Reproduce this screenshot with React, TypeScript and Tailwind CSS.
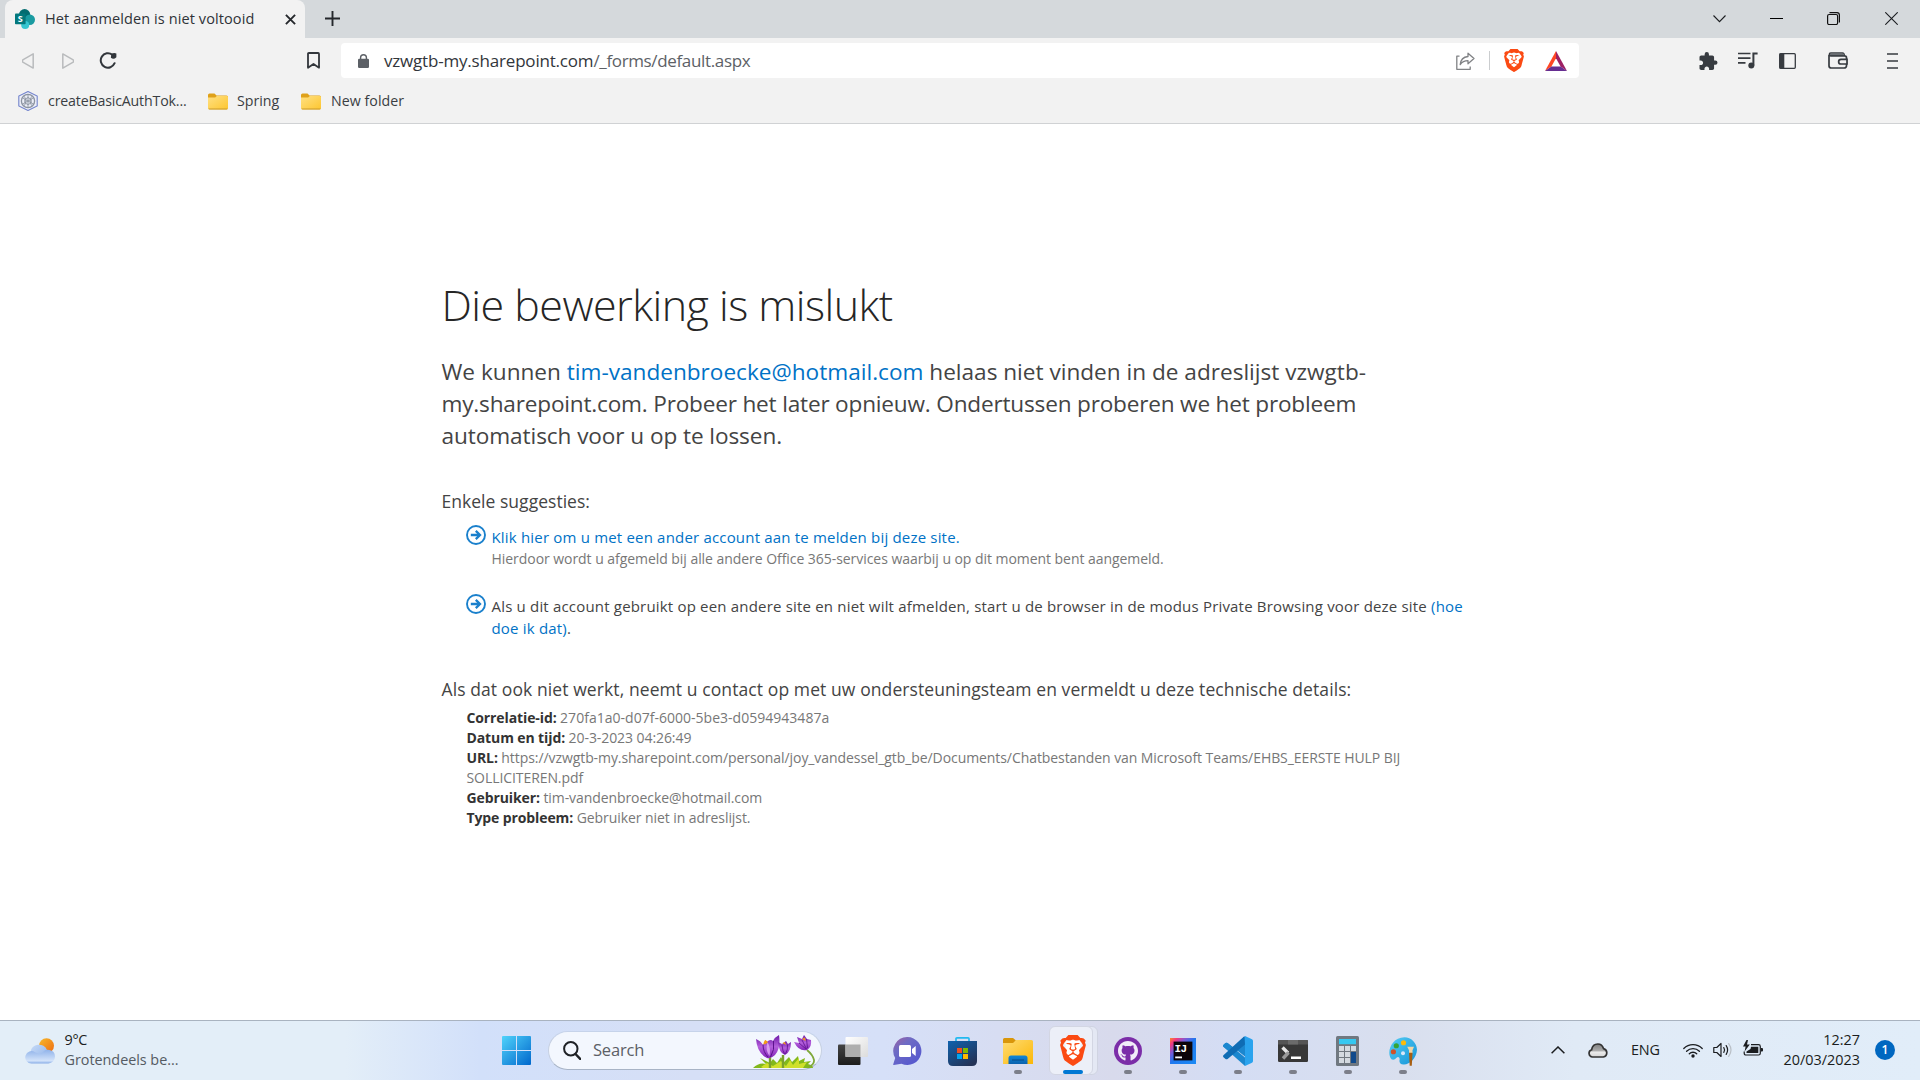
import React from "react";
import { SiBrave } from "react-icons/si";
import { FaGithub } from "react-icons/fa";

type IconProps = { className: string };

/* ---------- Browser icons ---------- */

const SharePointIcon = ({ className }: IconProps) => (
  <svg viewBox="0 0 20 20" className={className}>
    <circle cx="9.6" cy="5.6" r="5.6" fill="#036c70" />
    <circle cx="14.8" cy="10.8" r="5.2" fill="#1a9ba1" />
    <circle cx="10.2" cy="16" r="4" fill="#37c6d0" />
    <rect x="0" y="4.6" width="10.6" height="10.6" rx="0.8" fill="#03787c" />
    <text x="5.3" y="13.2" textAnchor="middle" fontFamily="Open Sans, sans-serif" fontWeight="700" fontSize="9" fill="#fff">S</text>
  </svg>
);

const HexIcon = ({ className }: IconProps) => (
  <svg viewBox="0 0 20 20" className={className} fill="none">
    <path d="M10 .5 19.200 5v10L10 19.500.800 15V5z" stroke="#7384cc" strokeWidth="1.100" fill="#eceef7" />
    <circle cx="10" cy="10" r="6.6" stroke="#8b93a0" strokeWidth="1.3" />
    <path d="M10 3.4v13.2M4.2 6.6l11.6 6.8M15.8 6.6 4.2 13.4M6 5.2c2.4 3 2.4 6.600 0 9.600M14 5.200c-2.400 3-2.400 6.600 0 9.600M10 6.500l3.200 1.800v3.600L10 13.600l-3.200-1.700V8.300z" stroke="#8b93a0" strokeWidth=".9" />
  </svg>
);

const BookmarkFolder = ({ className }: IconProps) => (
  <svg viewBox="0 0 20 17" className={className}>
    <path d="M0 2a1.500 1.500 0 0 1 1.500-1.500h5L8.500 2.500h10A1.500 1.500 0 0 1 20 4v10H0z" fill="#dfa11a" />
    <path d="M0 4.600h7.200L8.800 3H18.600A1.300 1.300 0 0 1 20 4.300V15a1.500 1.500 0 0 1-1.500 1.500h-17A1.500 1.500 0 0 1 0 15z" fill="url(#bf)" />
    <path d="M.3 15.600c.4.600.8.900 1.200.900h17c.5 0 .9-.300 1.200-.900z" fill="#c99a2c" />
    <defs><linearGradient id="bf" x1="0" y1="0" x2="1" y2="1"><stop stopColor="#ffe083" /><stop offset="1" stopColor="#fdc62f" /></linearGradient></defs>
  </svg>
);

const BackIcon = ({ className }: IconProps) => (
  <svg viewBox="0 0 12 16" className={className} fill="none" stroke="#b9bbbd" strokeWidth="1.500" strokeLinejoin="round">
    <path d="M11.200.900v14.200L.8 9.200Q0 8 .8 6.800z" />
  </svg>
);

const ReloadIcon = ({ className }: IconProps) => (
  <svg viewBox="0 0 18 17" className={className} fill="none" stroke="#32363b" strokeWidth="2">
    <path d="M15.600 11.200A7.200 7.200 0 1 1 13.300 2.700" strokeLinecap="round" />
    <path d="M12.300 1.800Q15 .500 17.400 1.400V5.200Q14.500 8 11.900 5.800z" fill="#32363b" stroke="none" />
  </svg>
);

const BookmarkIcon = ({ className }: IconProps) => (
  <svg viewBox="0 0 13 17" className={className} fill="none" stroke="#32363b" strokeWidth="1.800" strokeLinejoin="round">
    <path d="M1 1.900Q1 1 1.900 1h9.200q.9 0 .9.900V15.700L6.500 12 1 15.700z" />
  </svg>
);

const LockIcon = ({ className }: IconProps) => (
  <svg viewBox="0 0 11 14" className={className}>
    <path d="M2.600 6V3.600a2.900 2.900 0 0 1 5.800 0V6" fill="none" stroke="#5c6066" strokeWidth="1.400" />
    <rect x="0" y="4.800" width="11" height="9.200" rx="1.200" fill="#5c6066" />
  </svg>
);

const ShareIcon = ({ className }: IconProps) => (
  <svg viewBox="0 0 19 18" className={className} fill="none" stroke="#808285" strokeWidth="1.300" strokeLinejoin="round">
    <path d="M3.500 4.200H.800V17.300H14.200V14.600" />
    <path d="M12 1.200 18 6.600 12 11.800V8.700C8.500 8.700 6 10 4.200 12.600 4.600 8.300 7.600 5 12 4.500z" />
  </svg>
);

const BatIcon = ({ className }: IconProps) => (
  <svg viewBox="0 0 22 20" className={className}>
    <path d="M11 0 0 20 6.400 15.600 11 7.200z" fill="#ff4724" />
    <path d="M11 0 22 20 15.600 15.600 11 7.200z" fill="#9e1f63" />
    <path d="M0 20H22L15.600 15.600H6.400z" fill="#662d91" />
  </svg>
);

const PuzzleIcon = ({ className }: IconProps) => (
  <svg viewBox="2 1 21 21" className={className} fill="#373b40">
    <path d="M20.500 11H19V7c0-1.100-.9-2-2-2h-4V3.500a2.500 2.500 0 0 0-5 0V5H4c-1.100 0-1.990.9-1.990 2v3.800H3.500c1.490 0 2.700 1.210 2.700 2.700s-1.210 2.700-2.700 2.700H2V20c0 1.100.9 2 2 2h3.800v-1.500c0-1.490 1.210-2.700 2.700-2.700s2.700 1.210 2.700 2.700V22H17c1.100 0 2-.9 2-2v-4h1.500a2.500 2.500 0 0 0 0-5z" />
  </svg>
);

const PlaylistIcon = ({ className }: IconProps) => (
  <svg viewBox="0 0 20 17" className={className} fill="none" stroke="#373b40" strokeWidth="1.700">
    <path d="M0 1.500h12.500M0 6.200h12.500M0 10.800h7.500" />
    <path d="M15.400 13.500V1.500h4.200" strokeWidth="2" />
    <circle cx="13.300" cy="13.500" r="3" fill="#373b40" stroke="none" />
  </svg>
);

const SidebarIcon = ({ className }: IconProps) => (
  <svg viewBox="0 0 17 16" className={className}>
    <rect x=".7" y=".7" width="15.600" height="14.600" rx="1" fill="none" stroke="#373b40" strokeWidth="1.300" />
    <rect x=".5" y=".5" width="4.800" height="15" fill="#373b40" />
  </svg>
);

const WalletIcon = ({ className }: IconProps) => (
  <svg viewBox="0 0 20 17" className={className} fill="none" stroke="#373b40" strokeWidth="1.700">
    <path d="M1 3V13.700A2.300 2.300 0 0 0 3.300 16H16.200A2.300 2.300 0 0 0 18.500 13.700V5.800A2 2 0 0 0 16.500 3.800H2.800A1.400 1.400 0 0 1 2.800 1H14.500Q16.200 1 16.200 3.800" />
    <path d="M2 2.400H16" stroke="#6b6f74" strokeWidth="1.500" />
    <path d="M19 7.300H13a2.300 2.300 0 0 0 0 4.700H19z" fill="#f2f2f2" />
  </svg>
);

/* ---------- Page icon ---------- */

const ArrowCircle = ({ className }: IconProps) => (
  <svg viewBox="0 0 20 20" className={className} fill="none" stroke="#1a80cc" strokeWidth="1.900">
    <circle cx="10" cy="10" r="9" />
    <path d="M4.800 10H13.500M9.800 5.900 14 10l-4.200 4.100" strokeWidth="2.300" />
  </svg>
);

/* ---------- Taskbar icons ---------- */

const WeatherIcon = ({ className }: IconProps) => (
  <svg viewBox="0 0 30 26" className={className}>
    <defs>
      <linearGradient id="sun" x1="0" y1="0" x2="1" y2="1"><stop stopColor="#f7b92b" /><stop offset="1" stopColor="#ee6a12" /></linearGradient>
      <linearGradient id="cl" x1="0" y1="0" x2="0" y2="1"><stop stopColor="#90b3ea" /><stop offset=".8" stopColor="#d3e3fa" /><stop offset="1" stopColor="#86abe6" /></linearGradient>
      <linearGradient id="cl2" x1="0" y1="0" x2="1" y2="1"><stop stopColor="#c6daf7" /><stop offset="1" stopColor="#8fb2e9" /></linearGradient>
    </defs>
    <circle cx="21.500" cy="7.800" r="7.500" fill="url(#sun)" />
    <path d="M5.500 14A8.500 8 0 0 1 22 12V24H6z" fill="url(#cl2)" />
    <path d="M6.500 25.500A6.200 6.200 0 1 1 10 14.200l4 1.800 2.800.300A6.800 6.800 0 0 1 30 18.500a7 7 0 0 1-6.500 7z" fill="url(#cl)" />
  </svg>
);

const StartIcon = ({ className }: IconProps) => (
  <svg viewBox="0 0 29 29" className={className}>
    <defs><linearGradient id="win" x1="0" y1="0" x2="29" y2="29" gradientUnits="userSpaceOnUse"><stop stopColor="#50d3fb" /><stop offset="1" stopColor="#0067cc" /></linearGradient></defs>
    <path d="M1 0H14V14H0V1Q0 0 1 0zM15 0H28Q29 0 29 1V14H15zM0 15H14V29H1Q0 29 0 28zM15 15H29V28Q29 29 28 29H15z" fill="url(#win)" />
  </svg>
);

const CrocusFlowers = ({ className }: IconProps) => (
  <svg viewBox="0 0 62 33" className={className}>
    <defs>
      <linearGradient id="petal" x1="0" y1="0" x2="0" y2="1"><stop stopColor="#6d18a6" /><stop offset=".5" stopColor="#b45fdc" /><stop offset="1" stopColor="#8325b8" /></linearGradient>
    </defs>
    <path d="M0 33Q6 27 13 29L7 23 17 28 20 24 24 28 28 22 31 27 36 22 39 27 45 21 46 26 52 23 51 27 58 26 55 29Q60 30 60 33z" fill="#82b81b" />
    <path d="M8 32 14 28 20 31 28 26 33 31 37 25 40 30 46 23 46 29 54 27 50 33H10z" fill="#cfe02c" />
    <path d="M17 33V22M30 33V20" stroke="#7aa02c" strokeWidth="2.400" fill="none" />
    <path d="M54 15Q60 20 61 25Q61.500 29 56 32" stroke="#7fa83a" strokeWidth="1.800" fill="none" />
    <path d="M10 10 12 5 17 9z" fill="#f59a16" />
    <path d="M3 4Q8 6 10 10L15 6Q18 4 20 6Q22 2 26 0Q28 13 22 20Q18 24 14 23Q4 18 3 4z" fill="url(#petal)" />
    <path d="M14.500 7Q18 13 16.500 21Q12 15 14.500 7z" fill="#d79af0" />
    <path d="M10 9.500Q10 17 15 22M20.500 6Q22 15 17.500 22" stroke="#5c128c" strokeWidth="1" fill="none" />
    <path d="M10.500 8 12.500 5 15 7.200 12 9.500z" fill="#f59a16" />
    <path d="M25 7 29 9 33 6 35 9 38 7Q38 17 32 20Q26 18 25 7z" fill="url(#petal)" />
    <path d="M29.500 8 32 7 33 10z" fill="#f59a16" />
    <path d="M29 10Q29.500 16 31.500 19M34.500 9.500Q35 15 32.500 19" stroke="#5c128c" strokeWidth=".8" fill="none" />
    <path d="M41 7 46 8 44 2 49 4 51 0 54 4 58 5Q59 12 54 15Q46 17 41 7z" fill="url(#petal)" />
    <path d="M49 4 52 2.500 52.500 6z" fill="#f59a16" />
    <path d="M46 8 53 14M49 5 53.500 14M53.500 4 54.500 13" stroke="#5c128c" strokeWidth=".8" fill="none" />
  </svg>
);

const TaskViewIcon = ({ className }: IconProps) => (
  <svg viewBox="0 0 30 28" className={className}>
    <defs>
      <linearGradient id="tv" x1="0" y1="0" x2="0" y2="1"><stop stopColor="#444" /><stop offset="1" stopColor="#1d1d1d" /></linearGradient>
      <linearGradient id="tw" x1="0" y1="0" x2="1" y2="1"><stop stopColor="#fff" /><stop offset="1" stopColor="#dcdcdc" /></linearGradient>
    </defs>
    <rect x="0" y="7.500" width="22.500" height="20.500" rx="1" fill="url(#tv)" />
    <rect x="7.500" y="0" width="22.500" height="20" rx="1" fill="url(#tw)" />
    <rect x="7.500" y="7.500" width="15" height="12.500" fill="#aeaeae" />
  </svg>
);

const ChatIcon = ({ className }: IconProps) => (
  <svg viewBox="0 0 29 28" className={className}>
    <defs><linearGradient id="ch" x1="0" y1="0" x2=".8" y2="1"><stop stopColor="#a35f9f" /><stop offset=".35" stopColor="#6e6bc4" /><stop offset="1" stopColor="#5457cf" /></linearGradient></defs>
    <path d="M14.500 0a14 14 0 1 1-6 26.700L.800 28Q0 28 .300 27L2.200 21A14 14 0 0 1 14.500 0z" fill="url(#ch)" />
    <rect x="6" y="8" width="12" height="12" rx="1.500" fill="#fff" />
    <path d="M19 12 22.700 9V19L19 16z" fill="#fff" />
  </svg>
);

const StoreIcon = ({ className }: IconProps) => (
  <svg viewBox="0 0 29 29" className={className}>
    <defs><linearGradient id="st" x1="0" y1="0" x2=".7" y2="1"><stop stopColor="#0f62ae" /><stop offset="1" stopColor="#243357" /></linearGradient></defs>
    <path d="M8 5V1.800Q8 .900 9 .900H20Q21 .900 21 1.800V5" fill="none" stroke="#22b9ef" strokeWidth="1.700" />
    <path d="M0 4H29V24Q29 29 24 29H5Q0 29 0 24z" fill="url(#st)" />
    <path d="M9 11h5v5H9z" fill="#f25022" />
    <path d="M15 11h5v5h-5z" fill="#7fba00" />
    <path d="M9 17h5v5H9z" fill="#00a4ef" />
    <path d="M15 17h5v5h-5z" fill="#ffb900" />
  </svg>
);

const ExplorerIcon = ({ className }: IconProps) => (
  <svg viewBox="0 0 30 26" className={className}>
    <defs>
      <linearGradient id="ex" x1="0" y1="0" x2="1" y2="1"><stop stopColor="#ffdc73" /><stop offset="1" stopColor="#fbb707" /></linearGradient>
      <linearGradient id="eb" x1="0" y1="0" x2="0" y2="1"><stop stopColor="#0f87d8" /><stop offset="1" stopColor="#0b62ae" /></linearGradient>
    </defs>
    <path d="M0 1.500Q0 0 1.500 0H10L13 2.500V7H0z" fill="#d9960a" />
    <path d="M0 5H10L13 2H28.500Q30 2 30 3.500V26H0z" fill="url(#ex)" />
    <path d="M5.500 26V20Q5.500 17.500 8 17.500H22Q24.500 17.500 24.500 20V26z" fill="url(#eb)" />
    <path d="M9 22H21" stroke="#084a86" strokeWidth="1" />
  </svg>
);

const GithubDesktopIcon = ({ className }: IconProps) => (
  <span className={`flex items-center justify-center rounded-full bg-[#7b2da8] ${className}`}>
    <FaGithub viewBox="0 8 496 496" className="h-5 w-5 text-[#f1ecf8]" />
  </span>
);

const IdeIcon = ({ className }: IconProps) => (
  <svg viewBox="0 0 26 26" className={className}>
    <defs><linearGradient id="ij" x1="0" y1="0" x2="1" y2="1"><stop stopColor="#fb8d2b" /><stop offset=".14" stopColor="#f3387e" /><stop offset=".32" stopColor="#7a5bd8" /><stop offset=".5" stopColor="#1f78ef" /><stop offset="1" stopColor="#1b8bf5" /></linearGradient></defs>
    <rect width="26" height="26" fill="url(#ij)" />
    <rect x="3.600" y="3.600" width="18.800" height="18.800" fill="#0c0409" />
    <text x="4.600" y="13.600" fontFamily="Liberation Mono, monospace" fontWeight="700" fontSize="11" letterSpacing="-.8" fill="#fff">IJ</text>
    <rect x="5.200" y="18.500" width="6.800" height="1.800" fill="#fff" />
  </svg>
);

const CodeIcon = ({ className }: IconProps) => (
  <svg viewBox="0 0 30 30" className={className}>
    <path d="M22 8.500 22 0 6 15 .400 10.800Q-.400 9.500.800 8.400L2.500 7Q3.600 6.300 4.600 7.100L22 20.500z" fill="#1b87cf" />
    <path d="M22 21.500 22 30 .400 10.800Q-.400 9.500.800 8.400L2.500 7Q3.600 6.300 4.600 7.100z" fill="#1b87cf" />
    <path d="M22 8.500 4.600 22.900Q3.600 23.700 2.500 23L.800 21.600Q-.400 20.500.400 19.200L21 .500z" fill="#0f6cb4" />
    <path d="M22 0 29 3.200Q30 3.700 30 5V25Q30 26.300 29 26.800L22 30z" fill="#2aa3ee" />
  </svg>
);

const TerminalIcon = ({ className }: IconProps) => (
  <svg viewBox="0 0 30 22" className={className}>
    <rect width="30" height="22" rx="1.200" fill="#383838" />
    <path d="M0 4.500V1.200Q0 0 1.200 0H28.800Q30 0 30 1.200V4.500z" fill="#555" />
    <path d="M10 0h10v4.500H10z" fill="#6b6b6b" />
    <path d="M4.500 7.500 10 13" stroke="#e6e6e6" strokeWidth="3.400" fill="none" />
    <path d="M10.500 12.500 5 18.500" stroke="#9a9a9a" strokeWidth="3.400" fill="none" />
    <rect x="13" y="16.500" width="10" height="2.500" fill="#fff" />
  </svg>
);

const CalculatorIcon = ({ className }: IconProps) => (
  <svg viewBox="0 0 23 30" className={className}>
    <rect width="23" height="30" rx="1.500" fill="#707880" />
    <rect x="3" y="3" width="17" height="5.200" fill="#35c8f0" />
    <path d="M3 10h5v5H3zM9 10h5v5H9zM15 10h5v5h-5zM3 16h5v5H3zM9 16h5v5H9zM3 22h5v5H3zM9 22h5v5H9z" fill="#d4dae0" />
    <rect x="15" y="16" width="5" height="11" fill="#114a8b" />
  </svg>
);

const PaintIcon = ({ className }: IconProps) => (
  <svg viewBox="0 0 28 28.500" className={className}>
    <defs><linearGradient id="pa" x1="0" y1="0" x2="1" y2="1"><stop stopColor="#55cdf4" /><stop offset="1" stopColor="#1694d8" /></linearGradient></defs>
    <path d="M15.500 0A12.500 13 0 0 1 28 12.500C27.500 21 21 27 15 27.300C11 27.500 10 25 10.600 22.500C11 20 9 19 7.500 20.500C6 22.500 4 23 2.500 22C-3 16 2 0 15.500 0z" fill="url(#pa)" />
    <circle cx="7.300" cy="8.500" r="2.600" fill="#35a435" />
    <circle cx="14.500" cy="5.500" r="2.600" fill="#fdbb0a" />
    <circle cx="4.400" cy="14.500" r="2.600" fill="#d05228" />
    <circle cx="14" cy="16" r="2" fill="#d9e6f7" />
    <path d="M18.200 9.500H25L23.500 13V16H20V13z" fill="#f1d7a9" />
    <path d="M20 15.500H23.500L22.800 28.500H20.700z" fill="#a85f12" />
  </svg>
);

const TrayCloud = ({ className }: IconProps) => (
  <svg viewBox="0 0 20 15" className={className}>
    <defs><linearGradient id="tc" x1="0" y1="0" x2="0" y2="1"><stop stopColor="#7c7c7c" /><stop offset=".55" stopColor="#b0b0b0" /><stop offset=".6" stopColor="#ececec" /><stop offset="1" stopColor="#d6d6d6" /></linearGradient></defs>
    <path d="M4.500 14A3.700 3.700 0 0 1 3.600 6.800C4.400 2.500 7.200 1 9.800 1C12.700 1 14.700 2.800 15.500 5.600A4.300 4.300 0 0 1 15.300 14z" fill="url(#tc)" stroke="#333" strokeWidth="1.700" />
  </svg>
);

const WifiIcon = ({ className }: IconProps) => (
  <svg viewBox="0 0 20 15" className={className} fill="none" stroke="#1b1d20" strokeWidth="1.300" strokeLinecap="round">
    <path d="M.8 5.500A13 13 0 0 1 19.200 5.500M3.600 8.200A9 9 0 0 1 16.400 8.200M6.300 10.800A5.200 5.200 0 0 1 13.700 10.800" />
    <circle cx="10" cy="13" r="1.700" fill="#1b1d20" stroke="none" />
  </svg>
);

const SoundIcon = ({ className }: IconProps) => (
  <svg viewBox="0 0 20 16" className={className} fill="none" stroke="#1b1d20" strokeWidth="1.200" strokeLinecap="round" strokeLinejoin="round">
    <path d="M.8 5.500H3.800L8 1.500V14.500L3.800 10.500H.8z" />
    <path d="M10.800 5.600Q12.400 8 10.800 10.400M13.200 3.600Q16 8 13.200 12.400" />
    <path d="M15.700 1.600Q20.300 8 15.700 14.400" stroke="#b9bfc6" />
  </svg>
);

const BatteryIcon = ({ className }: IconProps) => (
  <svg viewBox="0 0 20 17" className={className}>
    <path d="M8 4.600H15.500Q17.300 4.600 17.300 6.400V13.200Q17.300 15 15.500 15H3Q1.200 15 1.200 13.200V11.500" fill="none" stroke="#1b1d20" strokeWidth="1.200" />
    <path d="M8 6.700H15.300V13H3.500V11.500L7.500 9z" fill="#1b1d20" />
    <path d="M18 8h1Q20 8 20 9v1.600q0 1-1 1h-1z" fill="#1b1d20" />
    <path d="M3.500 0 0 6.500H2.600L1.600 11.500 6.800 4.500H4L5 0z" fill="#1b1d20" />
  </svg>
);

/* ---------- Layout ---------- */

function TabStrip() {
  return (
    <div className="flex h-[38px] bg-[#d5d9dc] pl-[5px]">
      <div className="flex h-[38px] w-[300px] items-center rounded-t-lg bg-[#f2f2f2] pl-[10px] pr-[9px]">
        <SharePointIcon className="h-5 w-5 shrink-0" />
        <span className="ml-[10px] whitespace-nowrap text-[14.5px] tracking-[0.1px] text-[#2f3338]">Het aanmelden is niet voltooid</span>
        <svg viewBox="0 0 11 11" className="ml-auto h-[11px] w-[11px]" stroke="#25282c" strokeWidth="1.900"><path d="M.9.900 10.100 10.100M10.100.900.900 10.100" /></svg>
      </div>
      <svg viewBox="0 0 15 15" className="ml-5 mt-[11px] h-[15px] w-[15px]" stroke="#25282c" strokeWidth="1.900"><path d="M7.500 0V15M0 7.500H15" /></svg>
      <div className="ml-auto flex items-center pb-px pr-[22px]">
        <svg viewBox="0 0 13 8" className="h-2 w-[13px]" fill="none" stroke="#1b1d20" strokeWidth="1.100"><path d="M.5.500 6.500 6.700 12.500.500" /></svg>
        <span className="ml-11 h-px w-[13px] bg-black" />
        <svg viewBox="0 0 13 13" className="ml-11 h-[13px] w-[13px]" fill="none" stroke="#111" strokeWidth="1.200">
          <rect x=".6" y="2.500" width="10" height="10" rx="1.500" />
          <path d="M2.500.600H10A2.500 2.500 0 0 1 12.400 3V10.500" />
        </svg>
        <svg viewBox="0 0 13 13" className="ml-[45px] h-[13px] w-[13px]" stroke="#1b1d20" strokeWidth="1.100"><path d="M.3.300 12.700 12.700M12.700.300.300 12.700" /></svg>
      </div>
    </div>
  );
}

function BraveIcon({ className }: IconProps) {
  return (
    <span className={`relative block shrink-0 ${className}`}>
      <svg viewBox="0 0 20 24" preserveAspectRatio="none" className="absolute inset-0 h-full w-full"><path d="M4 5 7 4H13L16 5 15 16 10 20 5 16z" fill="#fff" /></svg>
      <SiBrave preserveAspectRatio="none" viewBox="1.700 0 20.600 24" className="absolute inset-0 h-full w-full text-[#fb4a13]" />
    </span>
  );
}

function Toolbar() {
  return (
    <div className="flex h-[45px] items-center bg-[#f2f2f2] pl-[22px] pr-[22px]">
      <BackIcon className="h-4 w-3" />
      <BackIcon className="ml-7 h-4 w-3 rotate-180" />
      <ReloadIcon className="ml-[25px] h-[17px] w-[18px]" />
      <BookmarkIcon className="ml-[190px] h-[17px] w-[13px]" />
      <div className="ml-[21px] flex h-[35px] w-[1238px] items-center rounded bg-white pl-[17px] pr-3">
        <LockIcon className="h-[14px] w-[11px]" />
        <div className="ml-[15px] whitespace-nowrap text-[17px] text-[#32363b]">
          <span className="tracking-[-0.19px]">vzwgtb-my.sharepoint.com</span>
          <span className="tracking-[-0.35px] text-[#5d6166]">/_forms/default.aspx</span>
        </div>
        <ShareIcon className="ml-auto h-[18px] w-[19px]" />
        <span className="ml-[14px] h-[19px] w-px bg-[#cbcdcf]" />
        <BraveIcon className="ml-[14px] h-[23px] w-5" />
        <BatIcon className="ml-[21px] h-5 w-[22px]" />
      </div>
      <PuzzleIcon className="ml-[120px] h-[18px] w-[19px]" />
      <PlaylistIcon className="ml-5 h-[17px] w-5" />
      <SidebarIcon className="ml-[21px] h-4 w-[17px]" />
      <WalletIcon className="ml-8 h-[17px] w-5" />
      <svg viewBox="0 0 11 16" className="ml-auto h-4 w-[11px]" stroke="#373b40" strokeWidth="1.500"><path d="M0 1H11M0 8H11M0 15H11" /></svg>
    </div>
  );
}

function BookmarksBar() {
  return (
    <div className="flex h-[41px] items-center border-b border-[#d0d2d4] bg-[#f2f2f2] pb-1 pl-[18px] text-[14.2px] text-[#3a3e43]">
      <HexIcon className="h-5 w-5" />
      <span className="ml-[10px] w-[160px] tracking-[-0.17px]">createBasicAuthTok...</span>
      <BookmarkFolder className="h-[17px] w-5" />
      <span className="ml-[9px] w-[64px]">Spring</span>
      <BookmarkFolder className="h-[17px] w-5" />
      <span className="ml-[10px] tracking-[0.05px]">New folder</span>
    </div>
  );
}

const details: [string, string][] = [
  ["Correlatie-id:", "270fa1a0-d07f-6000-5be3-d0594943487a"],
  ["Datum en tijd:", "20-3-2023 04:26:49"],
  ["URL:", "https://vzwgtb-my.sharepoint.com/personal/joy_vandessel_gtb_be/Documents/Chatbestanden van Microsoft Teams/EHBS_EERSTE HULP BIJ SOLLICITEREN.pdf"],
  ["Gebruiker:", "tim-vandenbroecke@hotmail.com"],
  ["Type probleem:", "Gebruiker niet in adreslijst."],
];

function ErrorPage() {
  return (
    <main className="flex-1 bg-white pl-[441.500px] pt-[151px] text-[#444]">
      <div className="w-[1030px]">
        <h1 className="text-[43px] font-light leading-[60px] tracking-[-0.53px] text-[#262626]">Die bewerking is mislukt</h1>
        <p className="mt-[21px] w-[960px] whitespace-nowrap text-[22.600px] leading-8">
          We kunnen <span className="text-[#0072c6]">tim-vandenbroecke@hotmail.com</span> helaas niet vinden in de adreslijst vzwgtb-<br />
          <span className="tracking-[-0.19px]">my.sharepoint.com. Probeer het later opnieuw. Ondertussen proberen we het probleem</span><br />
          <span className="tracking-[-0.08px]">automatisch voor u op te lossen.</span>
        </p>
        <h2 className="mt-[37px] text-[17.500px] leading-6 tracking-[0.03px]">Enkele suggesties:</h2>
        <ul className="mt-3 pl-[24.500px] text-[15px] leading-[22px] tracking-[0.185px]">
          <li className="flex gap-[5.500px]">
            <ArrowCircle className="h-5 w-5 shrink-0" />
            <div className="pt-px">
              <p className="text-[#0072c6]">Klik hier om u met een ander account aan te melden bij deze site.</p>
              <p className="text-[14px] tracking-[-0.05px] text-[#777]">Hierdoor wordt u afgemeld bij alle andere Office 365-services waarbij u op dit moment bent aangemeld.</p>
            </div>
          </li>
          <li className="mt-6 flex gap-[5.500px]">
            <ArrowCircle className="h-5 w-5 shrink-0" />
            <p className="whitespace-nowrap pt-px">
              Als u dit account gebruikt op een andere site en niet wilt afmelden, start u de browser in de modus Private Browsing voor deze site{" "}
              <span className="text-[#0072c6]">(hoe<br />doe ik dat)</span>.
            </p>
          </li>
        </ul>
        <h2 className="mt-[38px] text-[17.500px] leading-6 tracking-[0.092px]">Als dat ook niet werkt, neemt u contact op met uw ondersteuningsteam en vermeldt u deze technische details:</h2>
        <dl className="mt-[7px] w-[985px] pl-[25px] text-[14px] leading-5 tracking-[-0.075px] text-[#777]">
          {details.map(([label, value], i) => (
            <div key={label}>
              <dt className="inline font-bold tracking-[-0.11px] text-[#333]">{label}</dt>{" "}
              <dd className={i === 0 ? "inline tracking-[0.02px]" : "inline"}>{value}</dd>
            </div>
          ))}
        </dl>
      </div>
    </main>
  );
}

function TaskItem({ children, running }: { children: React.ReactNode; running?: boolean }) {
  return (
    <div className="flex w-[55px] flex-col items-center pt-[15px]">
      <div className="flex h-[30px] items-center justify-center">{children}</div>
      {running && <span className="mt-1 h-1 w-2 rounded-full bg-[#7c7f8a]" />}
    </div>
  );
}

function Taskbar() {
  return (
    <footer className="flex h-[60px] border-t border-[#a9b3c0] bg-[linear-gradient(90deg,#e3eef8_0%,#e3eef8_18%,#d2e0fa_25%,#d6dff6_36%,#d6e0f8_46%,#d8daec_58%,#d4ddf4_64%,#d9dfee_73%,#e0eaf6_82%,#e1edf9_100%)] text-[14.400px] text-[#1b1d20]">
      <div className="flex w-[490px] pl-[25px]">
        <WeatherIcon className="mt-[17px] h-[26px] w-[30px]" />
        <div className="ml-[9.500px] mt-[9px] leading-5">
          <p className="tracking-[-0.300px]">9°C</p>
          <p className="tracking-[-0.03px] text-[#555b63]">Grotendeels be...</p>
        </div>
      </div>
      <div className="flex">
        <div className="ml-3 mt-[15px]"><StartIcon className="h-[29px] w-[29px]" /></div>
        <div className="ml-[17px] mt-[10px] flex h-[39px] w-[274px] items-center rounded-full border border-b-[#a8b4c6] border-l-[#c6d0e2] border-r-[#c6d0e2] border-t-[#c6d3ea] bg-[#f3f7fe] pl-[14px]">
          <svg viewBox="0 0 18 19" className="h-[19px] w-[18px]" fill="none" stroke="#1f2226" strokeWidth="2"><circle cx="7.800" cy="7.800" r="6.700" /><path d="M12.500 13 17.200 18" strokeWidth="2.400" strokeLinecap="round" /></svg>
          <span className="ml-3 text-[16.500px] tracking-[-0.200px] text-[#5c6066]">Search</span>
          <CrocusFlowers className="mb-px ml-auto mr-[6px] h-[33px] w-[62px] self-end" />
        </div>
        <div className="ml-[3px] flex">
          <TaskItem><TaskViewIcon className="h-7 w-[30px]" /></TaskItem>
          <TaskItem><ChatIcon className="h-7 w-[29px]" /></TaskItem>
          <TaskItem><StoreIcon className="h-[29px] w-[29px]" /></TaskItem>
          <TaskItem running><ExplorerIcon className="h-[26px] w-[30px]" /></TaskItem>
          <div className="flex w-[55px] pl-[4px] pt-[5px]">
            <div className="z-10 flex h-[49px] w-[44px] shrink-0 flex-col items-center rounded-md border border-[#d3d6e3] bg-[#eceff8] pl-[3px] pt-2">
              <BraveIcon className="h-[31px] w-[26px]" />
              <span className="mt-1 h-1 w-5 shrink-0 rounded-full bg-[#0078d4]" />
            </div>
            <div className="-ml-1 h-[49px] w-[9px] rounded-r-md border border-[#d0d4e2] bg-[#e4e8f4]" />
          </div>
          <TaskItem running><GithubDesktopIcon className="h-7 w-7" /></TaskItem>
          <TaskItem running><IdeIcon className="h-[26px] w-[26px]" /></TaskItem>
          <TaskItem running><CodeIcon className="h-[30px] w-[30px]" /></TaskItem>
          <TaskItem running><TerminalIcon className="h-[22px] w-[30px]" /></TaskItem>
          <TaskItem running><CalculatorIcon className="h-[30px] w-[23px]" /></TaskItem>
          <TaskItem running><PaintIcon className="h-[29px] w-7" /></TaskItem>
        </div>
      </div>
      <div className="ml-auto flex items-center pb-px pr-[25px]">
        <svg viewBox="0 0 14 8" className="h-2 w-[14px]" fill="none" stroke="#1b1d20" strokeWidth="1.500"><path d="M.6 7.200 7 1 13.400 7.200" /></svg>
        <TrayCloud className="ml-[23px] h-[15px] w-5" />
        <span className="ml-[23px] w-[30px] text-[14.400px] tracking-[-0.200px]">ENG</span>
        <WifiIcon className="ml-[22px] h-[15px] w-5" />
        <SoundIcon className="ml-[10px] h-4 w-5" />
        <BatteryIcon className="-mt-[3px] ml-[10px] h-[17px] w-5" />
        <div className="ml-5 w-[77px] text-right leading-5">
          <p>12:27</p>
          <p>20/03/2023</p>
        </div>
        <span className="ml-[15px] flex h-5 w-5 items-center justify-center rounded-full bg-[#0067c0] text-[12px] font-semibold text-white">1</span>
      </div>
    </footer>
  );
}

export default function App() {
  return (
    <div className="flex h-[1080px] w-[1920px] flex-col overflow-hidden bg-white font-['Open_Sans','Noto_Sans',sans-serif]">
      <TabStrip />
      <Toolbar />
      <BookmarksBar />
      <ErrorPage />
      <Taskbar />
    </div>
  );
}
